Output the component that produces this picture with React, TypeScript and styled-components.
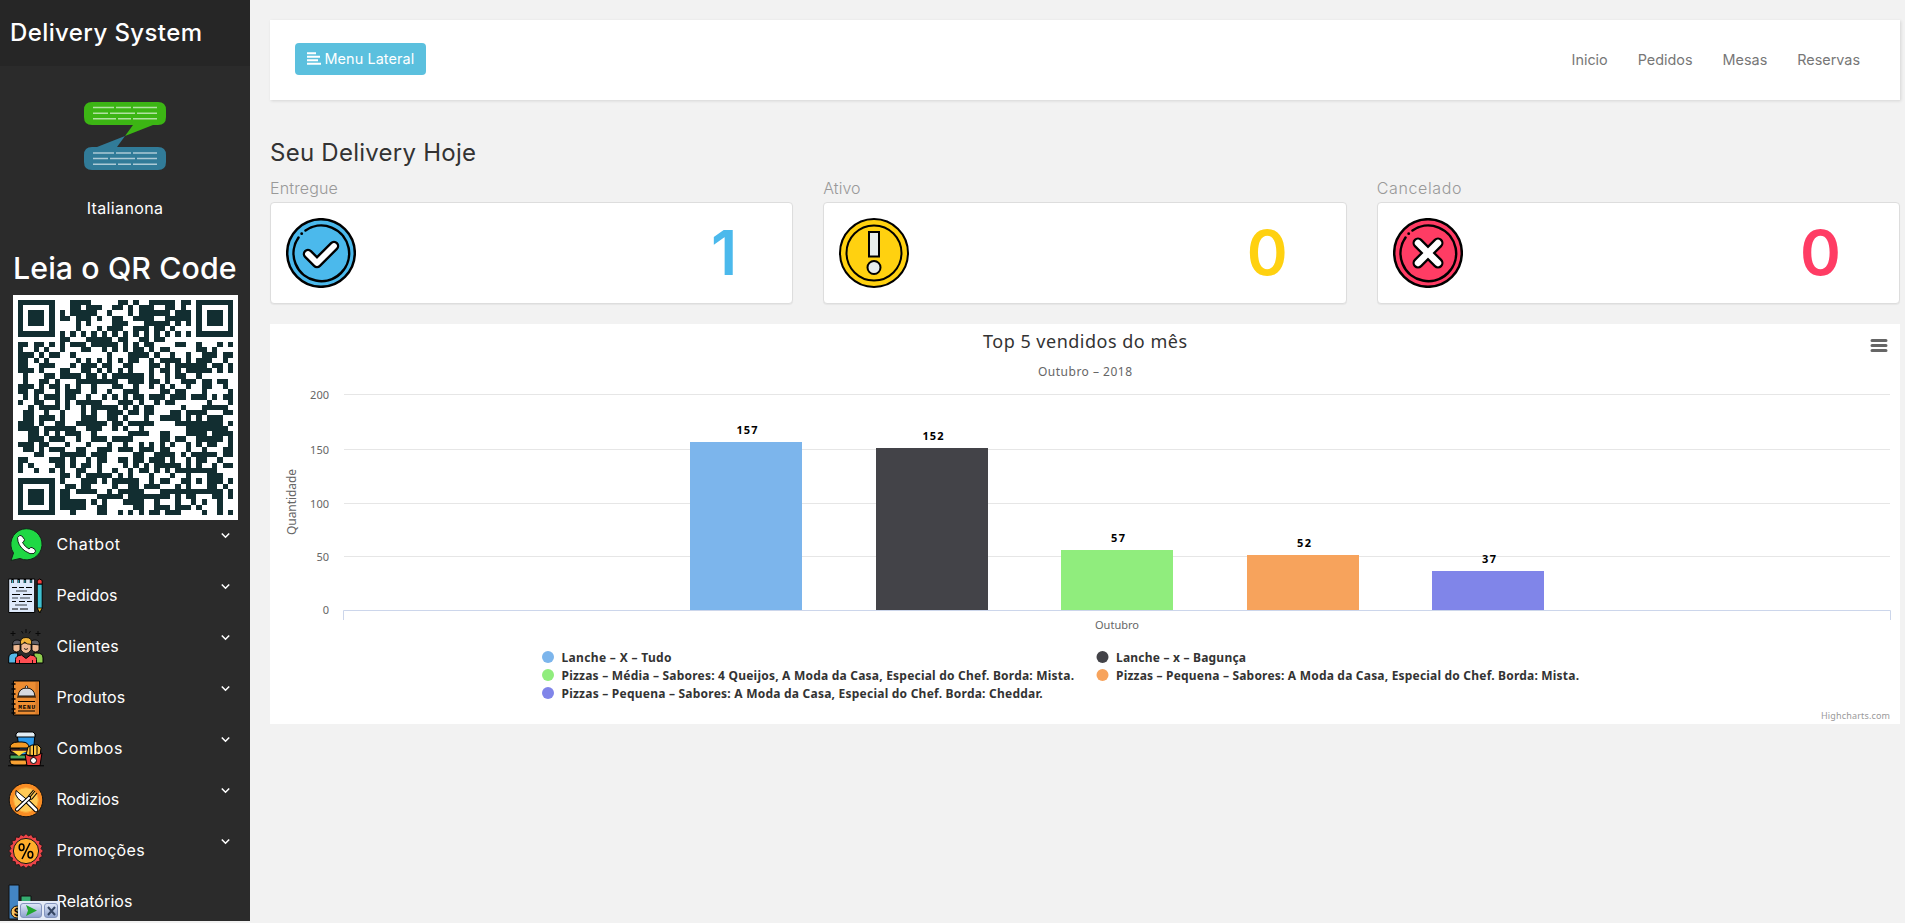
import React from "react";
import styled, { createGlobalStyle } from "styled-components";

const GlobalStyle = createGlobalStyle`
  *, *::before, *::after { box-sizing: border-box; }
  body {
    margin: 0;
    background: #f2f2f2;
    font-family: Inter, "Open Sans", sans-serif;
    overflow: hidden;
  }
`;

const Page = styled.div`
  display: flex;
  height: 923px;
`;

const Sidebar = styled.aside`
  position: relative;
  display: flex;
  flex-direction: column;
  flex: 0 0 250px;
  height: 921px;
  overflow: hidden;
  background: #2b2b2b;
  color: #fff;
`;

const Brand = styled.header`
  flex: 0 0 66px;
  padding-left: 10px;
  background: #262626;
  font-size: 24px;
  font-weight: 500;
  line-height: 65px;
  letter-spacing: 0.4px;
  white-space: nowrap;
`;

const Profile = styled.div`
  display: flex;
  flex: 0 0 167px;
  flex-direction: column;
  align-items: center;
  padding-top: 36px;
`;

const CompanyName = styled.p`
  margin: 26px 0 0;
  font-size: 16px;
  line-height: 24px;
  letter-spacing: 0.35px;
`;

const QrTitle = styled.h2`
  flex: 0 0 47px;
  margin: 15px 0 0 13px;
  font-size: 30.3px;
  font-weight: 500;
  line-height: 41px;
  letter-spacing: 0.1px;
  white-space: nowrap;
`;

const QrFrame = styled.div`
  flex: 0 0 225px;
  width: 225px;
  margin-left: 13px;
  padding: 5px;
  background: #fff;
`;

const MenuList = styled.nav`
  display: flex;
  flex: 0 0 auto;
  flex-direction: column;
`;

const MenuRow = styled.a`
  display: flex;
  flex: 0 0 51px;
  align-items: center;
  padding: 0 20px 2px 8px;
  font-size: 16px;
  line-height: 20px;
`;

const MenuLabel = styled.span<{ $spacing?: number }>`
  flex: 1;
  margin-left: 12.5px;
  padding-bottom: 1px;
  letter-spacing: ${(p) => p.$spacing ?? 0}px;
`;

const Chevron = styled.svg`
  align-self: flex-start;
  margin-top: 12px;
`;

const PlayerOverlay = styled.div`
  position: absolute;
  left: 18px;
  top: 901px;
  display: flex;
  gap: 2px;
  padding: 2px;
  width: 42px;
  height: 19px;
  background: #e4ebf7;
`;

const OverlayButton = styled.span<{ $wide?: boolean }>`
  display: flex;
  align-items: center;
  justify-content: center;
  flex: ${(p) => (p.$wide ? "0 0 22px" : "0 0 14px")};
  border: 1px solid #8394bd;
  border-radius: 3px;
  background: linear-gradient(#dde6f8, #8fa3cd);
`;

const Main = styled.main`
  flex: 1;
  padding: 20px 5px 0 20px;
`;

const TopBar = styled.div`
  display: flex;
  align-items: center;
  justify-content: space-between;
  height: 80px;
  padding: 0 40px 2px 25px;
  background: #fff;
  box-shadow: 1px 1px 3px rgba(0, 0, 0, 0.12);
`;

const MenuButton = styled.button`
  display: flex;
  align-items: center;
  gap: 3.5px;
  width: 131px;
  height: 32px;
  padding: 0 0 1px 12px;
  border: 0;
  border-radius: 4px;
  background: #5bc0de;
  color: #fff;
  font-family: inherit;
  font-size: 14.4px;
  letter-spacing: 0.1px;
  line-height: 29px;
  white-space: nowrap;
`;

const TopLinks = styled.nav`
  display: flex;
  gap: 30px;
  color: #777;
  font-size: 14.4px;
`;

const Heading = styled.h1`
  margin: 33px 0 0;
  height: 46px;
  color: #333;
  font-size: 24px;
  font-weight: 400;
  line-height: 39px;
  letter-spacing: 0.25px;
`;

const CardRow = styled.section`
  display: grid;
  grid-template-columns: repeat(3, 1fr);
  gap: 30px;
`;

const CardLabel = styled.div<{ $spacing: number }>`
  height: 23px;
  color: #999;
  font-size: 16px;
  font-weight: 300;
  line-height: 19px;
  letter-spacing: ${(p) => p.$spacing}px;
`;

const Card = styled.div<{ $inset: number }>`
  display: flex;
  align-items: center;
  justify-content: space-between;
  height: 102px;
  padding: 0 ${(p) => p.$inset}px 0 15px;
  border: 1px solid #ddd;
  border-radius: 4px;
  background: #fff;
  box-shadow: 0 1px 1px rgba(0, 0, 0, 0.05);
`;

const Amount = styled.span<{ $color: string }>`
  color: ${(p) => p.$color};
  font-size: 62px;
  font-weight: 600;
  line-height: 1;
`;

const ChartPanel = styled.section`
  height: 400px;
  margin-top: 20px;
  background: #fff;

  svg { display: block; }
  text { font-family: "Noto Sans", "Open Sans", sans-serif; }
`;

const qrSize = 41;

function finderCell(x: number, y: number): boolean | null {
  const corners = [[0, 0], [qrSize - 7, 0], [0, qrSize - 7]];
  for (const [cx, cy] of corners) {
    const dx = x - cx;
    const dy = y - cy;
    if (dx >= -1 && dx <= 7 && dy >= -1 && dy <= 7) {
      const d = Math.max(Math.abs(dx - 3), Math.abs(dy - 3));
      return d === 3 || d <= 1;
    }
  }
  const alignment = Math.max(Math.abs(x - 34), Math.abs(y - 34));
  if (alignment <= 2) return alignment !== 1;
  if (x === 6 || y === 6) return (x + y) % 2 === 0;
  return null;
}

function QrCode() {
  let path = "";
  let seed = 91;
  for (let y = 0; y < qrSize; y++) {
    for (let x = 0; x < qrSize; x++) {
      seed = (Math.imul(seed, 1664525) + 1013904223) >>> 0;
      const dark = finderCell(x, y) ?? seed / 4294967296 < 0.54;
      if (dark) path += `M${x} ${y}h1v1h-1z`;
    }
  }
  return (
    <svg display="block" width="215" height="215" viewBox="0 0 41 41" shapeRendering="crispEdges">
      <path d={path} fill="#122e31" />
    </svg>
  );
}

function Logo() {
  const lines = (y: number) => (
    <path
      d={`M9 ${y}h21M32 ${y}h15M49 ${y}h24M9 ${y + 5.6}h15M26 ${y + 5.6}h25M53 ${y + 5.6}h20M9 ${y + 11.2}h23M34 ${y + 11.2}h13M49 ${y + 11.2}h24`}
      stroke="#fff" strokeOpacity="0.6" strokeWidth="1.5"
    />
  );
  return (
    <svg width="82" height="68" viewBox="0 0 82 68">
      <path d="M8 0H74Q82 0 82 8V15Q82 23 74 23H69L41 34L49 23H8Q0 23 0 15V8Q0 0 8 0Z" fill="#3cb514" />
      <path d="M8 45H13L41 34L33 45H74Q82 45 82 53V60Q82 68 74 68H8Q0 68 0 60V53Q0 45 8 45Z" fill="#317b98" />
      {lines(5.6)}
      {lines(51)}
    </svg>
  );
}

const Icon = ({ children }: { children: React.ReactNode }) => (
  <svg width="36" height="36" viewBox="0 0 36 36" strokeLinejoin="round">{children}</svg>
);

const ChatbotIcon = () => (
  <Icon>
    <path d="M3 33.5L5.5 26A15.6 15.6 0 1 1 12 31.5Z" fill="#1fd844" stroke="#14251a" strokeWidth="1" />
    <path d="M9.5 10.5q2.5-3.5 4.5-1.5l2.5 3.5q0 2-2 3 2.5 4.5 6.5 6.5 1.5-2 3-1.5l3 2q1.5 1.5-1 4-3.5 1.5-9-2.5-7.5-5.5-7.5-13.5Z" fill="#fff" stroke="#102718" strokeWidth="1" />
  </Icon>
);

const PedidosIcon = () => (
  <Icon>
    <rect x="0.7" y="1" width="26" height="33.5" fill="#dfeafb" stroke="#000" />
    <path d="M4.5 1v4M10.7 1v4M16.9 1v4M23 1v4" stroke="#000" strokeWidth="2.4" />
    <path d="M4.5 2v3M10.7 2v3M16.9 2v3M23 2v3" stroke="#3cb7c9" />
    <path d="M4 9.5h5m2 0h5m2 0h6M4 16.5h8m3 0h9M4 23.5h4m3 0h6m2 0h5M4 31h6m2 0h8" stroke="#000" />
    <path d="M8 13h11M4 20h6m2 0h10M7 27h12" stroke="#6e7680" strokeWidth="1.4" />
    <path d="M29.2 6h5v24l-2.5 5l-2.5-5Z" fill="#3fc0d0" stroke="#000" />
    <path d="M29.2 6V2.5q2.5-3 5 0V6Z" fill="#ed3f3d" stroke="#000" />
    <path d="M29.2 30h5l-2.5 4.5Z" fill="#f5bb36" stroke="#000" strokeWidth="0.8" />
  </Icon>
);

const ClientesIcon = () => (
  <Icon>
    <path d="M0.7 34v-5q0-5 6-5h3v10Z" fill="#55b9e9" stroke="#000" />
    <path d="M26 34V24h3q6 0 6 5v5Z" fill="#91ce50" stroke="#000" />
    <g fill="#efb993" stroke="#000" strokeWidth="0.8">
      <path d="M5 15h7v6q-3.500 4-7 0ZM24 15h7v6q-3.500 4-7 0Z" />
      <path d="M13 14h10v7q-5 7-10 0Z" />
    </g>
    <path d="M4.500 16q0-5 4.500-5t4.500 4ZM22.500 15q0-4 4.500-4t4.500 5Z" fill="#5e5d65" stroke="#000" strokeWidth="0.8" />
    <path d="M12.500 15.500q-1-7 5.500-7t5.500 7q-5 0-7-2.500-1 2.500-4 2.500Z" fill="#f1b43b" stroke="#000" strokeWidth="0.8" />
    <path d="M7.500 34.500v-4q0-4 6-4.500l4.500 3.500 4.500-3.500q6 .5 6 4.500v4Z" fill="#ff4e52" stroke="#000" />
    <path d="M11.500 34v-3M24.500 34v-3" stroke="#000" strokeWidth="0.8" />
    <path d="M5 2v5M2.500 4.500h5M18 0v4M13.500 2l1.500 2.500M22.500 2l-1.500 2.500M30 2v5M27.500 4.500h5" stroke="#090909" />
    <path d="M16 19.500q2 2 4 0" stroke="#000" strokeWidth="0.8" fill="none" />
  </Icon>
);

const ProdutosIcon = () => (
  <Icon>
    <rect x="5.5" y="1" width="26" height="34" fill="#ed8d32" stroke="#000" />
    <path d="M29 2v32" stroke="#d77928" strokeWidth="3" />
    <path d="M3.5 4h4M3.5 9h4M3.5 14h4M3.5 19h4M3.5 24h4M3.5 29h4M3.5 33h4" stroke="#050505" strokeWidth="1.3" />
    <path d="M10 16q1-8 8.5-8t8.5 8Z" fill="#d6d9df" stroke="#000" strokeWidth="0.9" />
    <circle cx="18.5" cy="7" r="1.2" fill="#fff" stroke="#000" strokeWidth="0.8" />
    <path d="M9 17h19M10 21.5h17M10 31h17" stroke="#000" strokeWidth="1.1" />
    <text x="18.7" y="28.5" textAnchor="middle" fontSize="6.2" fontWeight="700" fontFamily="Liberation Mono, monospace" textLength="17">MENU</text>
  </Icon>
);

const CombosIcon = () => (
  <Icon>
    <path d="M9 3h18l-2 21H12Z" fill="#2b98e9" stroke="#000" />
    <path d="M8 6V3l2-2h15l2 2v3Z" fill="#e2edf4" stroke="#000" />
    <path d="M2 17q0-6 8-6h4q7 0 7 6Z" fill="#f49b25" stroke="#000" />
    <path d="M2 24h19v4H2Z" fill="#49a659" stroke="#000" />
    <path d="M2 18h19l-1 3H3Z" fill="#76402c" stroke="#000" />
    <path d="M4 20h16l-5 2-4 3-4-3Z" fill="#ffd239" />
    <path d="M2 29h19v3q-1 2-4 2H6q-4 0-4-3Z" fill="#f8a133" stroke="#000" />
    <path d="M18 24l2-8 4-2h6l3 3-1 8Z" fill="#ffc340" stroke="#000" />
    <path d="M22 15v9M25.5 14v10M29 15v9" stroke="#000" />
    <path d="M17 23q8 5 17-1l-2 12.5H19Z" fill="#eb3b38" stroke="#000" />
    <circle cx="25.5" cy="29.5" r="3" fill="#fff" stroke="#000" />
    <path d="M0 34.8h36" stroke="#000" />
  </Icon>
);

const RodiziosIcon = () => (
  <Icon>
    <circle cx="18" cy="18" r="16.8" fill="#f98d24" stroke="#111" />
    <circle cx="18" cy="18" r="12.3" fill="#ffca56" stroke="#ffa837" />
    <path d="M19 19L28 28" stroke="#000" strokeWidth="4.6" strokeLinecap="round" />
    <path d="M19 19L28 28" stroke="#fff" strokeWidth="2.6" strokeLinecap="round" />
    <path d="M8 8.5Q6.5 13 10 16.5T17.5 21L20 18.5Z" fill="#fff" stroke="#000" />
    <path d="M22 15L27 9M24 17L29 11M20.5 14L25.5 8M20.5 14Q20 18 24 17" fill="none" stroke="#000" strokeWidth="1.1" />
    <path d="M21 16L9 27.5" stroke="#000" strokeWidth="4.2" strokeLinecap="round" />
    <path d="M21 16L9 27.5" stroke="#fff" strokeWidth="2.2" strokeLinecap="round" />
  </Icon>
);

const sealPoints = Array.from({ length: 40 }, (_, i) => {
  const angle = (i * Math.PI) / 20;
  const radius = i % 2 ? 15.2 : 17.3;
  return `${(18 + radius * Math.cos(angle)).toFixed(2)},${(18 + radius * Math.sin(angle)).toFixed(2)}`;
}).join(" ");

const PromocoesIcon = () => (
  <Icon>
    <polygon points={sealPoints} fill="#ee4549" stroke="#151515" strokeWidth="0.8" />
    <circle cx="18" cy="18" r="12.6" fill="#ffad2a" stroke="#151515" />
    <g fill="none" stroke="#000" strokeWidth="1.5">
      <ellipse cx="13.6" cy="14.2" rx="2.4" ry="3.2" />
      <ellipse cx="22.4" cy="21.8" rx="2.4" ry="3.2" />
      <path d="M22 10l-8 16" />
    </g>
  </Icon>
);

const RelatoriosIcon = () => (
  <Icon>
    <rect x="1" y="1" width="10" height="34" fill="#4385c4" stroke="#111" />
    <rect x="13" y="12" width="10" height="23" fill="#35ad70" stroke="#111" />
    <circle cx="9" cy="28" r="6" fill="#f4c465" stroke="#111" />
    <text x="9" y="31.5" textAnchor="middle" fontSize="10" fontWeight="700">$</text>
  </Icon>
);

const menu = [
  { label: "Chatbot", icon: <ChatbotIcon />, spacing: 0.6 },
  { label: "Pedidos", icon: <PedidosIcon />, spacing: 0 },
  { label: "Clientes", icon: <ClientesIcon />, spacing: 0.15 },
  { label: "Produtos", icon: <ProdutosIcon />, spacing: 0.1 },
  { label: "Combos", icon: <CombosIcon />, spacing: 0.55 },
  { label: "Rodizios", icon: <RodiziosIcon />, spacing: -0.2 },
  { label: "Promoções", icon: <PromocoesIcon />, spacing: 0.3 },
  { label: "Relatórios", icon: <RelatoriosIcon />, spacing: 0.1, leaf: true },
];

const Ring = ({ color }: { color: string }) => (
  <>
    <circle cx="35" cy="35" r="33.8" fill={color} stroke="#000" strokeWidth="2.5" />
    <path d="M19.5 12.5A27.8 27.8 0 1 1 12.5 19.5" fill="none" stroke="#000" strokeWidth="2.5" strokeLinecap="round" />
    <circle cx="15.7" cy="15.7" r="1.4" />
  </>
);

const DoneIcon = () => (
  <svg width="70" height="70" viewBox="0 0 70 70">
    <Ring color="#4bb9ec" />
    <path d="M22 36L31 45L48 28" fill="none" stroke="#000" strokeWidth="10.5" strokeLinecap="round" strokeLinejoin="round" />
    <path d="M22 36L31 45L48 28" fill="none" stroke="#fff" strokeWidth="5.8" strokeLinecap="round" strokeLinejoin="round" />
  </svg>
);

const ActiveIcon = () => (
  <svg width="70" height="70" viewBox="0 0 70 70">
    <circle cx="35" cy="35" r="34" fill="#ffd110" stroke="#000" strokeWidth="2" />
    <circle cx="35" cy="35" r="27.5" fill="none" stroke="#000" strokeWidth="2" />
    <rect x="30" y="14" width="10" height="24.5" fill="#e7edec" stroke="#000" strokeWidth="2" />
    <circle cx="35" cy="49.5" r="6.5" fill="#e7edec" stroke="#000" strokeWidth="2" />
  </svg>
);

const CancelIcon = () => (
  <svg width="70" height="70" viewBox="0 0 70 70">
    <Ring color="#ff3c64" />
    <path d="M25 25L45 45M45 25L25 45" stroke="#000" strokeWidth="11" strokeLinecap="round" />
    <path d="M25 25L45 45M45 25L25 45" stroke="#fff" strokeWidth="6.5" strokeLinecap="round" />
  </svg>
);

const cards = [
  { label: "Entregue", icon: <DoneIcon />, amount: 1, color: "#4bb9ec", spacing: 0.15, inset: 55 },
  { label: "Ativo", icon: <ActiveIcon />, amount: 0, color: "#ffd110", spacing: 0, inset: 58 },
  { label: "Cancelado", icon: <CancelIcon />, amount: 0, color: "#ff3c64", spacing: 0.65, inset: 58 },
];

const bars = [
  { value: 157, x: 420, top: 118, color: "#7cb5ec" },
  { value: 152, x: 606, top: 124, color: "#434348" },
  { value: 57, x: 791, top: 226, color: "#90ed7d" },
  { value: 52, x: 977, top: 231, color: "#f7a35c" },
  { value: 37, x: 1162, top: 247, color: "#8085e9" },
];

const gridLines = [
  { label: "200", y: 70.5 },
  { label: "150", y: 125.5 },
  { label: "100", y: 179.5 },
  { label: "50", y: 232.5 },
];

const legend = [
  { text: "Lanche – X – Tudo", x: 278, y: 333, width: 110, color: "#7cb5ec" },
  { text: "Lanche – x – Bagunça", x: 832.5, y: 333, width: 130, color: "#434348" },
  { text: "Pizzas – Média – Sabores: 4 Queijos, A Moda da Casa, Especial do Chef. Borda: Mista.", x: 278, y: 351, width: 512.5, color: "#90ed7d" },
  { text: "Pizzas – Pequena – Sabores: A Moda da Casa, Especial do Chef. Borda: Mista.", x: 832.5, y: 351, width: 463, color: "#f7a35c" },
  { text: "Pizzas – Pequena – Sabores: A Moda da Casa, Especial do Chef. Borda: Cheddar.", x: 278, y: 369, width: 481, color: "#8085e9" },
];

function SalesChart() {
  return (
    <svg width="1630" height="400" viewBox="0 0 1630 400">
      <text x="815" y="23.5" textAnchor="middle" fontSize="18" fill="#333" textLength="204">Top 5 vendidos do mês</text>
      <text x="815" y="52" textAnchor="middle" fontSize="12" fill="#666" textLength="94">Outubro – 2018</text>
      <path d="M1602 16.5h14M1602 21.5h14M1602 26.5h14" stroke="#666" strokeWidth="3" strokeLinecap="round" />
      {gridLines.map((g) => (
        <g key={g.label}>
          <path d={`M74 ${g.y}H1620`} stroke="#e6e6e6" />
          <text x="59" y={g.y + 4} textAnchor="end" fontSize="11" fill="#666">{g.label}</text>
        </g>
      ))}
      <text x="59" y="290" textAnchor="end" fontSize="11" fill="#666">0</text>
      <text transform="translate(26 178) rotate(-90)" textAnchor="middle" fontSize="12" fill="#666" textLength="66">Quantidade</text>
      {bars.map((b) => (
        <g key={b.value}>
          <rect x={b.x} y={b.top} width="112" height={286 - b.top} fill={b.color} />
          <text x={b.x + 57} y={b.top - 8} textAnchor="middle" fontSize="11" fontWeight="700" textLength={b.value > 99 ? 21 : 14}>{b.value}</text>
        </g>
      ))}
      <path d="M73.5 296V286.5H1620.5V296" fill="none" stroke="#ccd6eb" />
      <text x="847" y="305" textAnchor="middle" fontSize="11" fill="#666" textLength="44">Outubro</text>
      {legend.map((l) => (
        <g key={l.text}>
          <circle cx={l.x} cy={l.y} r="6" fill={l.color} />
          <text x={l.x + 13.5} y={l.y + 5} fontSize="12" fontWeight="700" fill="#333" textLength={l.width}>{l.text}</text>
        </g>
      ))}
      <text x="1620" y="395" textAnchor="end" fontSize="9" fill="#999" textLength="69">Highcharts.com</text>
    </svg>
  );
}

export default function App() {
  return (
    <>
      <GlobalStyle />
      <Page>
        <Sidebar>
          <Brand>Delivery System</Brand>
          <Profile>
            <Logo />
            <CompanyName>Italianona</CompanyName>
          </Profile>
          <QrTitle>Leia o QR Code</QrTitle>
          <QrFrame><QrCode /></QrFrame>
          <MenuList>
            {menu.map((m) => (
              <MenuRow key={m.label}>
                {m.icon}
                <MenuLabel $spacing={m.spacing}>{m.label}</MenuLabel>
                {!m.leaf && (
                  <Chevron width="9" height="7" viewBox="0 0 9 7">
                    <path d="M0.8 1.5L4.5 5.2L8.2 1.5" fill="none" stroke="#fff" strokeWidth="1.6" />
                  </Chevron>
                )}
              </MenuRow>
            ))}
          </MenuList>
          <PlayerOverlay>
            <OverlayButton $wide>
              <svg width="12" height="11" viewBox="0 0 12 11"><path d="M1 0L12 5.5L1 11L3 5.5Z" fill="#20a82e" /></svg>
            </OverlayButton>
            <OverlayButton>
              <svg width="9" height="10" viewBox="0 0 9 10"><path d="M1 1L8 9M8 1L1 9" stroke="#344563" strokeWidth="2" /></svg>
            </OverlayButton>
          </PlayerOverlay>
        </Sidebar>
        <Main>
          <TopBar>
            <MenuButton>
              <svg width="14" height="13" viewBox="0 0 14 13"><path d="M0 1.2h9M0 4.7h13M0 8.2h11M0 11.8h14" stroke="#fff" strokeWidth="2.1" /></svg>
              Menu Lateral
            </MenuButton>
            <TopLinks>
              <span>Inicio</span>
              <span>Pedidos</span>
              <span>Mesas</span>
              <span>Reservas</span>
            </TopLinks>
          </TopBar>
          <Heading>Seu Delivery Hoje</Heading>
          <CardRow>
            {cards.map((c) => (
              <div key={c.label}>
                <CardLabel $spacing={c.spacing}>{c.label}</CardLabel>
                <Card $inset={c.inset}>
                  {c.icon}
                  <Amount $color={c.color}>{c.amount}</Amount>
                </Card>
              </div>
            ))}
          </CardRow>
          <ChartPanel><SalesChart /></ChartPanel>
        </Main>
      </Page>
    </>
  );
}
